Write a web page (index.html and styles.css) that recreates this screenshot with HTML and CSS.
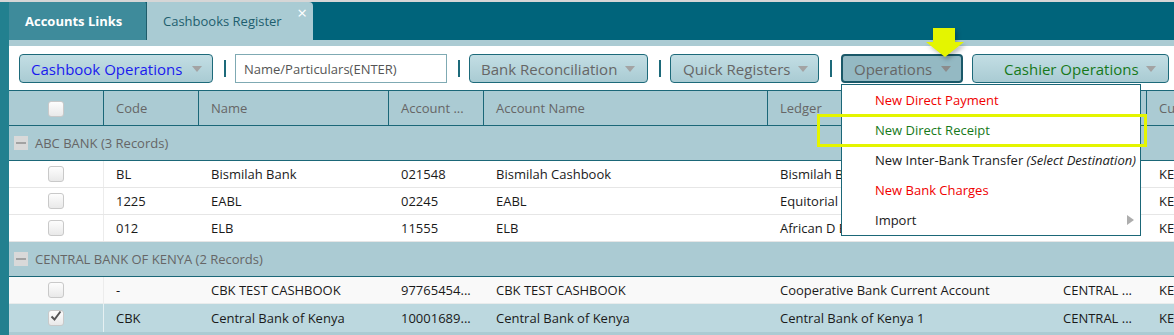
FILE: index.html
```html
<!DOCTYPE html>
<html>
<head>
<meta charset="utf-8">
<link rel="stylesheet" href="styles.css">
</head>
<body>
<div class="topline"></div>
<div class="app">
  <div class="leftbar"></div>
  <div class="main">
    <div class="tabbar">
      <div class="tab tab-links">Accounts Links</div>
      <div class="tab tab-active">Cashbooks Register<span class="close">×</span></div>
    </div>
    <div class="substrip"></div>
    <div class="toolbar">
      <div class="tools">
        <div class="btn btn-cashbook"><span class="label">Cashbook Operations</span><span class="caret"></span></div>
        <span class="sep"></span>
        <div class="search">Name/Particulars(ENTER)</div>
        <span class="sep"></span>
        <div class="btn btn-bank"><span class="label">Bank Reconciliation</span><span class="caret"></span></div>
        <span class="sep"></span>
        <div class="btn btn-quick"><span class="label">Quick Registers</span><span class="caret"></span></div>
        <span class="sep"></span>
        <div class="btn btn-ops"><span class="label">Operations</span><span class="caret"></span></div>
        <div class="btn btn-cashier"><span class="label">Cashier Operations</span><span class="caret"></span></div>
      </div>
    </div>
    <div class="grid">
      <div class="row head">
        <div class="cell c-check"><span class="cb"></span></div>
        <div class="cell">Code</div>
        <div class="cell">Name</div>
        <div class="cell">Account ...</div>
        <div class="cell">Account Name</div>
        <div class="cell">Ledger</div>
        <div class="cell"></div>
        <div class="cell">Currency</div>
      </div>
      <div class="group"><span class="collapse"></span>ABC BANK (3 Records)</div>
      <div class="row data">
        <div class="cell c-check"><span class="cb"></span></div>
        <div class="cell">BL</div>
        <div class="cell">Bismilah Bank</div>
        <div class="cell">021548</div>
        <div class="cell">Bismilah Cashbook</div>
        <div class="cell">Bismilah B</div>
        <div class="cell"></div>
        <div class="cell">KES</div>
      </div>
      <div class="row data">
        <div class="cell c-check"><span class="cb"></span></div>
        <div class="cell">1225</div>
        <div class="cell">EABL</div>
        <div class="cell">02245</div>
        <div class="cell">EABL</div>
        <div class="cell">Equitorial B</div>
        <div class="cell"></div>
        <div class="cell">KES</div>
      </div>
      <div class="row data">
        <div class="cell c-check"><span class="cb"></span></div>
        <div class="cell">012</div>
        <div class="cell">ELB</div>
        <div class="cell">11555</div>
        <div class="cell">ELB</div>
        <div class="cell">African D B</div>
        <div class="cell"></div>
        <div class="cell">KES</div>
      </div>
      <div class="group"><span class="collapse"></span>CENTRAL BANK OF KENYA (2 Records)</div>
      <div class="row data alt">
        <div class="cell c-check"><span class="cb"></span></div>
        <div class="cell">-</div>
        <div class="cell">CBK TEST CASHBOOK</div>
        <div class="cell">97765454...</div>
        <div class="cell">CBK TEST CASHBOOK</div>
        <div class="cell">Cooperative Bank Current Account</div>
        <div class="cell">CENTRAL ...</div>
        <div class="cell">KES</div>
      </div>
      <div class="row data selected">
        <div class="cell c-check"><span class="cb checked"><svg viewBox="0 0 16 16" width="16" height="16"><path d="M3.5 8.5 L6.5 11.5 L12.5 3.5" fill="none" stroke="#555" stroke-width="2"/></svg></span></div>
        <div class="cell">CBK</div>
        <div class="cell">Central Bank of Kenya</div>
        <div class="cell">10001689...</div>
        <div class="cell">Central Bank of Kenya</div>
        <div class="cell">Central Bank of Kenya 1</div>
        <div class="cell">CENTRAL ...</div>
        <div class="cell">KES</div>
      </div>
    </div>
  </div>
</div>

<div class="menu">
  <div class="item red">New Direct Payment</div>
  <div class="item green">New Direct Receipt</div>
  <div class="item">New Inter-Bank Transfer <em>(Select Destination)</em></div>
  <div class="item red">New Bank Charges</div>
  <div class="item">Import<span class="sub"></span></div>
</div>
<div class="highlight"></div>
<svg class="pointer" viewBox="0 0 38 30" width="38" height="30"><polygon points="7,0 29,0 29,14 38,14 19,29 0,14 7,14" fill="#e4f500"/></svg>
</body>
</html>
```
FILE: styles.css
```css
* { box-sizing: border-box; }
body {
  margin: 0;
  width: 1174px;
  height: 335px;
  overflow: hidden;
  position: relative;
  background: #fff;
  font-family: "Open Sans", "DejaVu Sans", sans-serif;
  font-size: 13px;
  color: #222;
}
.topline { height: 2px; background: #d6d6d6; }
.app { display: flex; height: 333px; }
.leftbar { width: 9px; flex: none; background: #22808f; }
.main { flex: 1; min-width: 0; overflow: hidden; background: #abcbd3; }

.tabbar { height: 38px; background: #00647b; display: flex; }
.tab { height: 38px; display: flex; align-items: center; padding-left: 16px; font-size: 13px; }
.tab-links { width: 138px; background: #3e8b9b; color: #fff; font-weight: bold; border-right: 1px solid #1f5c6a; border-top-right-radius: 2px; }
.tab-active { width: 166px; background: #a9cbd3; color: #1e5e6e; position: relative; border-top-right-radius: 4px; }
.close { position: absolute; right: 6px; top: 1px; color: #fff; font-size: 17px; line-height: 20px; }

.substrip { height: 6px; background: #abcbd3; }
.toolbar { height: 44px; background: #fff; padding: 8px 0 0 10px; }
.tools { display: flex; align-items: center; height: 29px; }
.btn {
  height: 29px;
  border: 1px solid #1d6a7a;
  border-radius: 4px;
  background: linear-gradient(#c3dee4, #a9cbd3);
  display: flex;
  align-items: center;
  justify-content: space-between;
  padding: 0 10px 0 11px;
  font-size: 15px;
  color: #666;
  flex: none;
}
.caret { width: 0; height: 0; border-left: 5px solid transparent; border-right: 5px solid transparent; border-top: 6px solid #a3a3a3; margin-top: 1px; }
.btn-cashbook { width: 194px; color: #1a1aee; }
.btn-bank { width: 179px; padding-right: 12px; }
.btn-quick { width: 149px; padding-left: 12px; }
.btn-ops { width: 122px; padding-left: 11px; background: #94b9c3; border: 2px solid #1a5868; }
.btn-ops .caret { border-top-color: #8b8b8b; }
.btn-cashier { width: 197px; margin-left: 9px; color: #17791a; padding-left: 31px; padding-right: 12px; }
.sep { width: 2px; height: 17px; background: #1d6a7a; margin: 0 9px 0 11px; flex: none; }
.search { width: 212px; height: 29px; border: 1px solid #7faab3; padding-left: 8px; display: flex; align-items: center; color: #555; font-size: 13px; flex: none; }

.grid { width: 1300px; }
.row { display: grid; grid-template-columns: 95px 95px 190px 95px 284px 283px 96px 100px; }
.cell { display: flex; align-items: center; padding-left: 12px; white-space: nowrap; overflow: hidden; }
.c-check { justify-content: center; padding-left: 0; }
.head { height: 36px; border-top: 1px solid #1b6778; border-bottom: 1px solid #1b6778; background: #abcbd3; color: #666; }
.head .cell { border-right: 1px solid #1b6778; }
.head .c-check { padding-top: 2px; }
.group { height: 35px; border-bottom: 1px solid #1b6778; background: #abcbd3; color: #666; display: flex; align-items: center; padding-left: 5px; }
.collapse { width: 14px; height: 14px; background: #d9d9d9; position: relative; margin-right: 7px; }
.collapse::after { content: ""; position: absolute; left: 2px; right: 2px; top: 6px; height: 2px; background: #a2a2a2; }
.data { height: 27px; background: #fff; border-bottom: 1px solid #e6e6e6; color: #1a1a1a; }
.data .c-check { border-right: 1px solid #ececec; }
.data.alt { background: #f9f9f9; border-bottom-color: #e9ecec; }
.data.selected { background: #bcd8df; height: 28px; border-bottom: none; }
.data.selected .c-check { border-right-color: #e6f0f2; }
.cb { width: 16px; height: 16px; border: 1px solid #c9c9c9; border-radius: 3px; background: linear-gradient(#fdfdfd, #e9e9e9); display: block; position: relative; }
.cb svg { position: absolute; left: -1px; top: -3px; }

.menu { position: absolute; left: 841px; top: 84px; width: 300px; height: 152px; background: #fff; border: 1px solid #1b6778; }
.item { height: 30px; line-height: 30px; padding-left: 33px; font-size: 13px; color: #1a1a1a; position: relative; white-space: nowrap; }
.item.red { color: #f00000; }
.item.green { color: #17791a; }
.item em { font-style: italic; }
.sub { position: absolute; right: 6px; top: 10px; width: 0; height: 0; border-top: 5px solid transparent; border-bottom: 5px solid transparent; border-left: 7px solid #adadad; }

.highlight { position: absolute; left: 817px; top: 114px; width: 330px; height: 33px; border: 3px solid #e4f500; }
.pointer { position: absolute; left: 926px; top: 28px; filter: drop-shadow(2px 3px 2px rgba(0,0,0,0.25)); }
```
